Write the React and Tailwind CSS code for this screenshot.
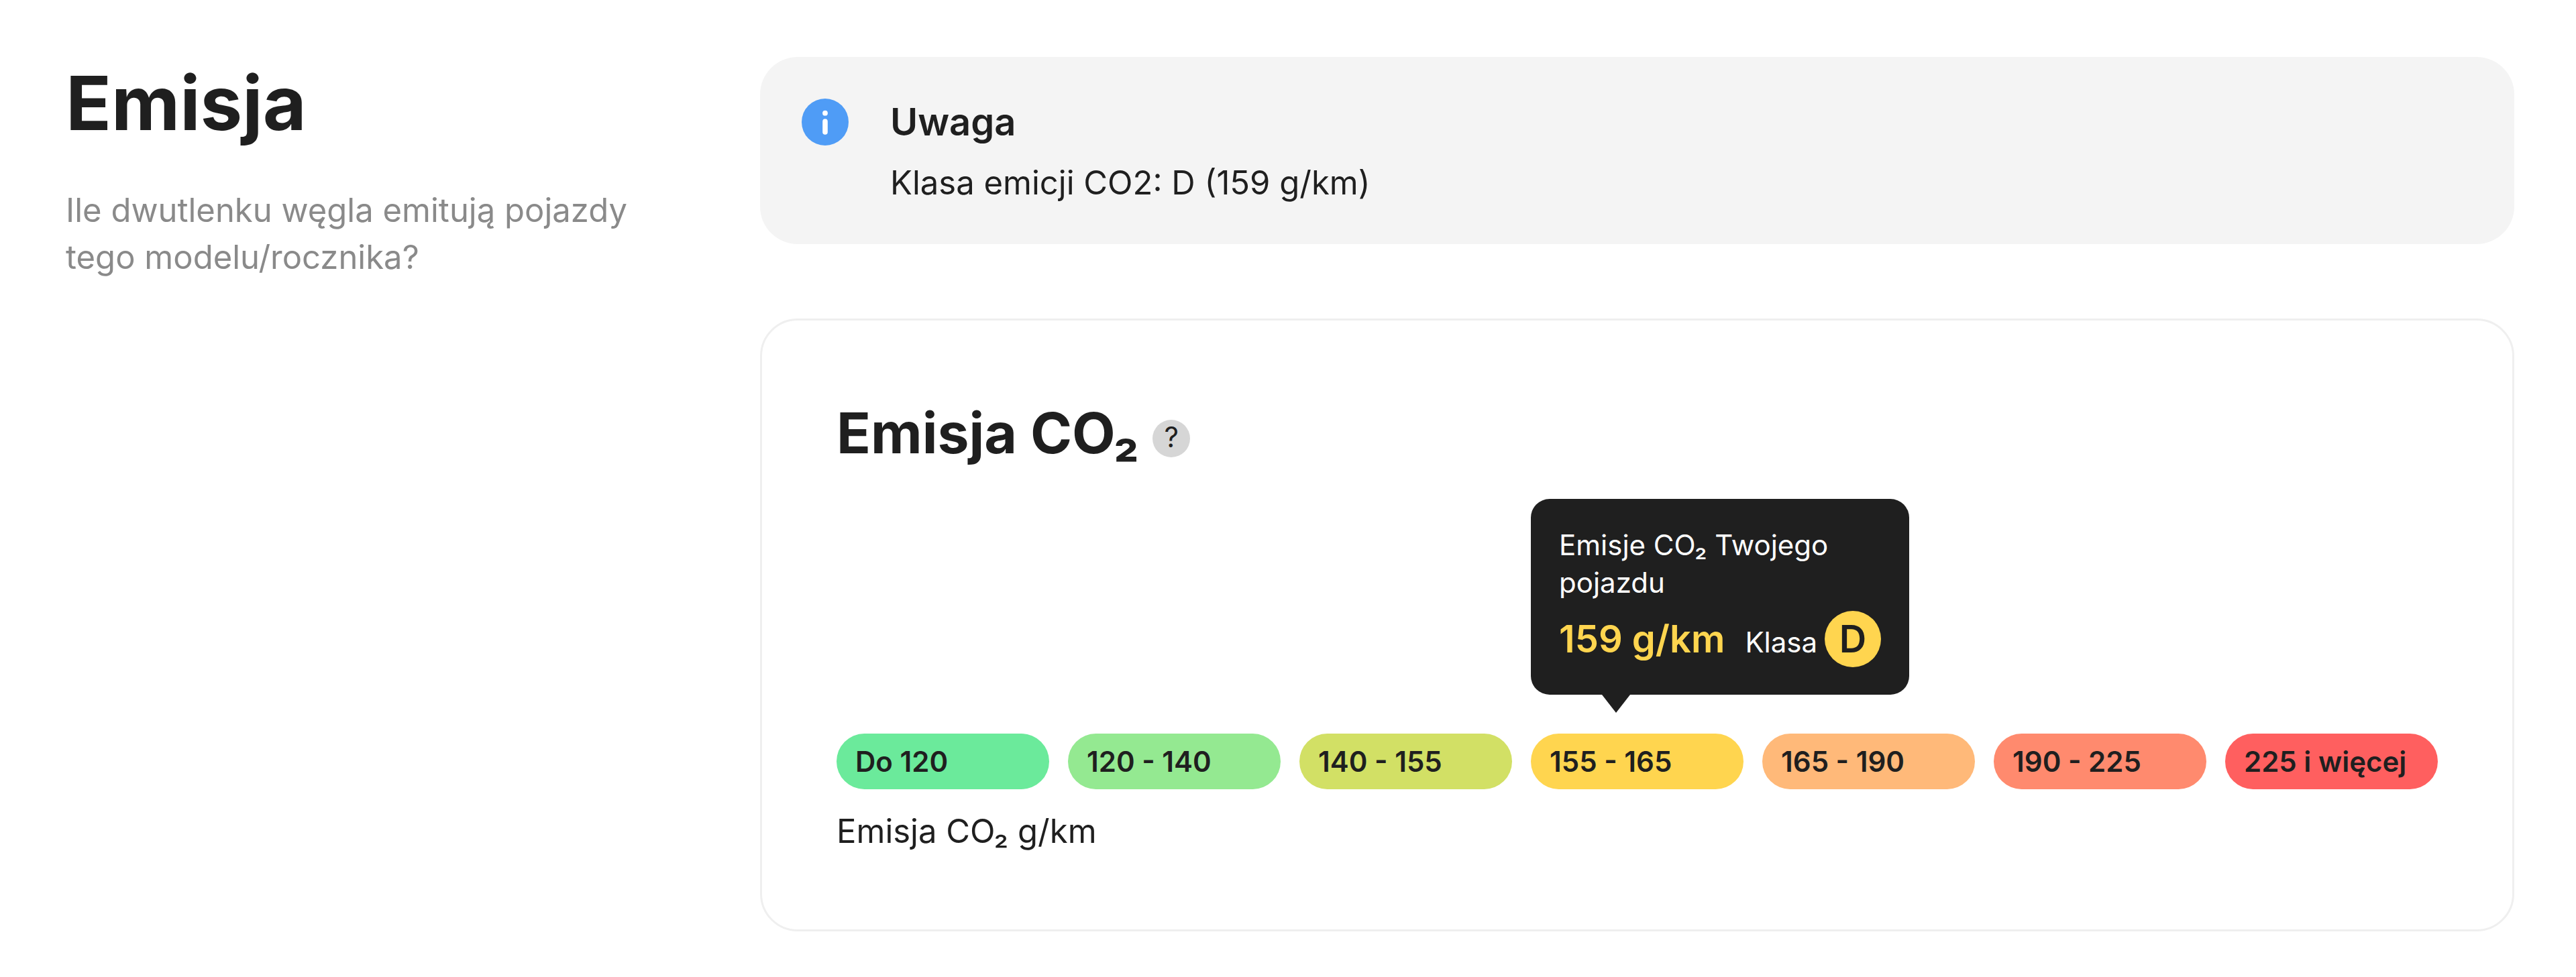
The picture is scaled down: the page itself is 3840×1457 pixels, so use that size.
import { clsx } from "clsx";

const RANGES = [
    { label: "Do 120", color: "bg-[#6bea9b]" },
    { label: "120 - 140", color: "bg-[#94e991]" },
    { label: "140 - 155", color: "bg-[#d2e065]" },
    { label: "155 - 165", color: "bg-[#ffd54f]", active: true },
    { label: "165 - 190", color: "bg-[#ffb979]" },
    { label: "190 - 225", color: "bg-[#ff8a6e]" },
    { label: "225 i więcej", color: "bg-[#ff5f5f]" },
];

const InfoIcon = () => (
    <svg className="size-[70px] shrink-0" viewBox="0 0 70 70" aria-hidden="true">
        <circle cx="35" cy="35" r="35" fill="#4f9cf6" />
        <circle cx="35" cy="21.7" r="3.9" fill="#fff" />
        <rect x="31.2" y="30.3" width="7.6" height="23.4" rx="3.8" fill="#fff" />
    </svg>
);

const EmissionTooltip = () => (
    <div className="absolute bottom-full left-0 mb-[58px] w-[564px] rounded-[28px] bg-[#1f1f1f] px-[42px] py-[41px] text-white">
        <p className="text-[42px] leading-[56px]">Emisje CO₂ Twojego pojazdu</p>
        <div className="mt-[14px] flex items-baseline whitespace-nowrap">
            <span className="text-[56px] leading-[84px] font-semibold text-[#ffd54f]">159 g/km</span>
            <span className="ml-[30px] text-[42px] leading-[56px]">Klasa</span>
            <span className="ml-auto size-[84px] rounded-full bg-[#ffd54f] text-center text-[56px] leading-[84px] font-semibold text-[#1f1f1f]">
                D
            </span>
        </div>
        <svg className="absolute top-full left-[106px] h-[27px] w-[42px]" viewBox="0 0 42 27" aria-hidden="true">
            <path d="M0 0H42L21 27Z" fill="#1f1f1f" />
        </svg>
    </div>
);

export default function App() {
    return (
        <main className="flex min-h-screen bg-white pt-[85px] pr-[92px] pb-[68px] pl-[98px] font-[Inter,sans-serif] text-[#1f1f1f]">
            <section className="w-[1035px] shrink-0">
                <h1 className="text-[112px] leading-[136px] font-bold">Emisja</h1>
                <p className="mt-[58px] max-w-[900px] text-[49px] leading-[70px] text-[#8a8a8a]">
                    Ile dwutlenku węgla emitują pojazdy tego modelu/rocznika?
                </p>
            </section>

            <div className="flex min-w-0 flex-1 flex-col gap-[111px]">
                <section className="flex gap-[62px] rounded-[56px] bg-[#f4f4f4] px-[62px] pt-[62px] pb-14">
                    <InfoIcon />
                    <div>
                        <h2 className="text-[56px] leading-[70px] font-semibold">Uwaga</h2>
                        <p className="mt-[21px] text-[49px] leading-[70px]">Klasa emicji CO2: D (159 g/km)</p>
                    </div>
                </section>

                <section className="rounded-[56px] border-[3px] border-[#efefef] px-[111px] pt-28 pb-[111px]">
                    <div className="flex items-center">
                        <h2 className="text-[84px] leading-[112px] font-bold">Emisja CO₂</h2>
                        <button
                            type="button"
                            aria-label="Pomoc"
                            className="mt-4 ml-5 flex size-14 items-center justify-center rounded-full bg-[#d6d6d6] pb-1 text-[42px] leading-none"
                        >
                            ?
                        </button>
                    </div>
                    <ul className="mt-[392px] grid grid-cols-7 gap-7">
                        {RANGES.map((range) => (
                            <li
                                key={range.label}
                                className={clsx(
                                    "relative rounded-full px-7 text-[42px] leading-[83px]",
                                    range.color
                                )}
                            >
                                <span className="font-semibold">{range.label}</span>
                                {range.active && <EmissionTooltip />}
                            </li>
                        ))}
                    </ul>
                    <p className="mt-7 text-[49px] leading-[70px]">Emisja CO₂ g/km</p>
                </section>
            </div>
        </main>
    );
}
